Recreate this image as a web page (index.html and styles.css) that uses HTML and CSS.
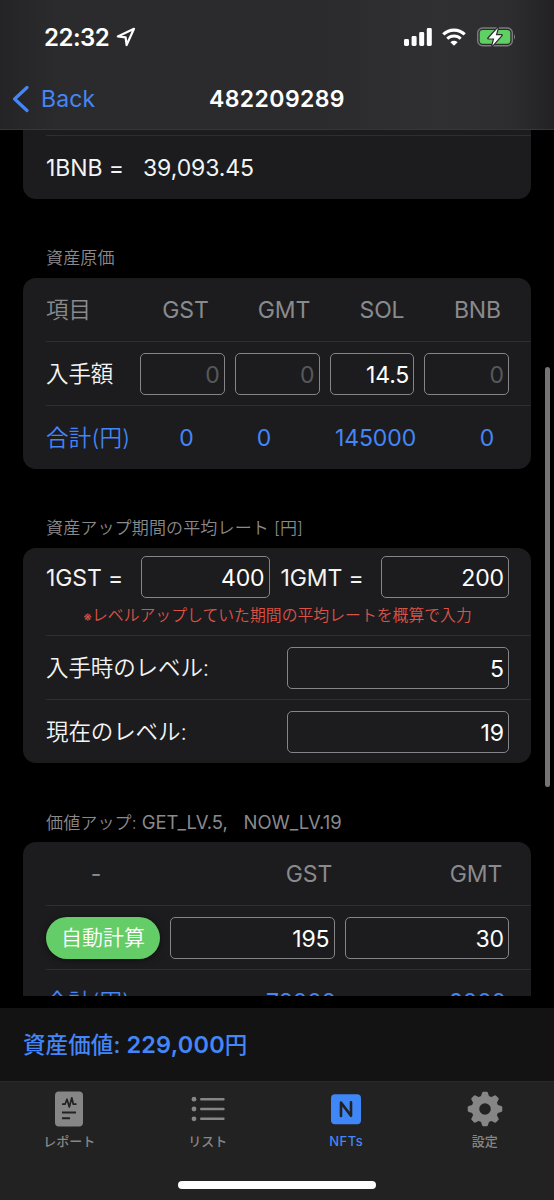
FILE: index.html
```
<!DOCTYPE html>
<html lang="ja">
<head>
    <meta charset="UTF-8">
    <meta name="viewport" content="width=device-width, initial-scale=1.0">
    <title>482209289</title>
    <link rel="stylesheet" href="styles.css">
</head>
<body>

    <header class="header">
        <div class="status-bar">
            <span class="time">22:32</span>
            <svg class="location" width="20" height="20" viewBox="0 0 20 20">
                <path d="M1.8 9.4 L18 1.8 L10.6 18 L9.6 10.4 Z" fill="none" stroke="#fff" stroke-width="2.2" stroke-linejoin="round"/>
            </svg>
            <div class="status-icons">
                <svg width="28" height="18" viewBox="0 0 28 18" fill="#fff">
                    <rect x="0" y="11" width="5" height="7" rx="1.4"/>
                    <rect x="7.6" y="8" width="5" height="10" rx="1.4"/>
                    <rect x="15.2" y="4" width="5" height="14" rx="1.4"/>
                    <rect x="22.8" y="0" width="5" height="18" rx="1.4"/>
                </svg>
                <svg class="wifi" width="24" height="18" viewBox="0 0 24 18">
                    <path d="M1.3 6.4 A15.3 15.3 0 0 1 22.7 6.4" fill="none" stroke="#fff" stroke-width="3.2"/>
                    <path d="M5.3 10.8 A9.6 9.6 0 0 1 18.7 10.8" fill="none" stroke="#fff" stroke-width="3"/>
                    <path d="M8.4 14.2 A5.2 5.2 0 0 1 15.6 14.2 L12 17.8 Z" fill="#fff"/>
                </svg>
                <svg class="battery" width="40" height="20" viewBox="0 0 40 20">
                    <rect x=".7" y="1" width="34.6" height="17.8" rx="5" fill="none" stroke="#7b7b7d" stroke-width="1.4"/>
                    <rect x="2.7" y="3" width="30.6" height="13.8" rx="3.2" fill="#5fd163"/>
                    <path d="M37 7 Q39.2 9.9 37 12.8 Z" fill="#7b7b7d"/>
                    <path d="M20.8 1 L11.4 11.4 L17.3 11.4 L15.3 18.8 L24.6 8.2 L18.8 8.2 Z" fill="#fff" stroke="#2c2c2e" stroke-width="2.4" paint-order="stroke" stroke-linejoin="round"/>
                </svg>
            </div>
        </div>
        <div class="nav-bar">
            <a class="back">
                <svg width="17" height="28" viewBox="0 0 17 28">
                    <path d="M15 2.5 L2.6 14 L15 25.5" fill="none" stroke="#4486f6" stroke-width="3.2" stroke-linecap="round" stroke-linejoin="round"/>
                </svg>
                <span>Back</span>
            </a>
            <h1>482209289</h1>
        </div>
    </header>

    <main class="content">
        <section class="card card-top">
            <div class="row">
                <span class="name">1BNB =</span>
                <span>39,093.45</span>
            </div>
        </section>

        <!-- 資産原価 -->
        <h2>資産原価</h2>
        <section class="card">
            <div class="row cost-head">
                <span class="label">項目</span>
                <span>GST</span>
                <span>GMT</span>
                <span>SOL</span>
                <span>BNB</span>
            </div>
            <div class="row cost-inputs">
                <span class="label">入手額</span>
                <input type="text" placeholder="0">
                <input type="text" placeholder="0">
                <input type="text" value="14.5">
                <input type="text" placeholder="0">
            </div>
            <div class="row cost-total">
                <span class="label">合計(円)</span>
                <span>0</span>
                <span>0</span>
                <span>145000</span>
                <span>0</span>
            </div>
        </section>

        <!-- 平均レートとレベル -->
        <h2>資産アップ期間の平均レート [円]</h2>
        <section class="card">
            <div class="row rate">
                <div class="rate-inputs">
                    <span class="label">1GST =</span>
                    <input type="text" value="400">
                    <span class="label">1GMT =</span>
                    <input type="text" value="200">
                </div>
                <p class="note"><span class="mark">※</span>レベルアップしていた期間の平均レートを概算で入力</p>
            </div>
            <div class="row level">
                <span class="label">入手時のレベル:</span>
                <input type="text" value="5">
            </div>
            <div class="row level">
                <span class="label">現在のレベル:</span>
                <input type="text" value="19">
            </div>
        </section>

        <!-- 価値アップ -->
        <h2>価値アップ: <span class="latin">GET_LV.5,&nbsp;&nbsp; NOW_LV.19</span></h2>
        <section class="card">
            <div class="row value-head">
                <span>-</span>
                <span>GST</span>
                <span>GMT</span>
            </div>
            <div class="row value-inputs">
                <button type="button">自動計算</button>
                <input type="text" value="195">
                <input type="text" value="30">
            </div>
            <div class="row value-total">
                <span class="label">合計(円)</span>
                <span>78000</span>
                <span>6000</span>
            </div>
        </section>
        <div class="scrollbar"></div>
    </main>

    <div class="summary">資産価値: <span class="latin">229,000</span>円</div>

    <nav class="tab-bar">
        <a class="tab">
            <svg width="36" height="36" viewBox="0 0 36 36">
                <rect x="4" y="0.5" width="28" height="35" rx="4" fill="#868686"/>
                <path d="M11 13.2 H14 L16 8.2 L18.3 16 L20.8 6.8 L22.3 13.2 H25.5" fill="none" stroke="#222" stroke-width="1.7" stroke-linejoin="round"/>
                <path d="M11 21.5 H25 M11 27.3 H19" stroke="#222" stroke-width="2"/>
            </svg>
            <span>レポート</span>
        </a>
        <a class="tab">
            <svg width="36" height="36" viewBox="0 0 36 36" fill="#868686">
                <circle cx="4" cy="8.2" r="2.4"/>
                <circle cx="4" cy="18" r="2.4"/>
                <circle cx="4" cy="27.8" r="2.4"/>
                <path d="M11.2 8.2 H33.5 M11.2 18 H33.5 M11.2 27.8 H33.5" stroke="#868686" stroke-width="2.4" stroke-linecap="round"/>
            </svg>
            <span>リスト</span>
        </a>
        <a class="tab active">
            <svg width="36" height="36" viewBox="0 0 36 36">
                <rect x="3" y="3.2" width="30" height="30" rx="4" fill="#3f86f7"/>
                <path d="M13 25 V11.6 L23 24.8 V11.4" fill="none" stroke="#222" stroke-width="2.6" stroke-linecap="round" stroke-linejoin="round"/>
            </svg>
            <span>NFTs</span>
        </a>
        <a class="tab">
            <svg width="36" height="36" viewBox="-18 -18 36 36" fill="#868686">
                <circle r="9.6" fill="none" stroke="#868686" stroke-width="7.6"/>
                <path id="tooth" d="M-4.6 -11 L-2.9 -16.3 Q-2.6 -17.3 -1.6 -17.3 H1.6 Q2.6 -17.3 2.9 -16.3 L4.6 -11 Z"/>
                <use href="#tooth" transform="rotate(45)"/>
                <use href="#tooth" transform="rotate(90)"/>
                <use href="#tooth" transform="rotate(135)"/>
                <use href="#tooth" transform="rotate(180)"/>
                <use href="#tooth" transform="rotate(225)"/>
                <use href="#tooth" transform="rotate(270)"/>
                <use href="#tooth" transform="rotate(315)"/>
            </svg>
            <span>設定</span>
        </a>
        <div class="home-indicator"></div>
    </nav>

</body>
</html>
```

FILE: styles.css
```
* {
    box-sizing: border-box;
}

body {
    margin: 0;
    height: 1200px;
    display: flex;
    flex-direction: column;
    overflow: hidden;
    background-color: #000;
    color: #f4f4f4;
    font-family: Inter, "Noto Sans CJK JP", sans-serif;
    font-size: 23px;
    line-height: 30px;
    letter-spacing: -0.1px;
}

/* En-tête */
.header {
    height: 130px;
    flex: none;
    border-bottom: 1px solid #363638;
    background: linear-gradient(90deg, #242426 0, #2b2b2d 60px, #2b2b2d 320px, #303032 440px, #2d2d2f 510px, #222224 554px);
}

.status-bar {
    height: 74px;
    display: flex;
    align-items: center;
    padding: 0 37px 0 44px;
    color: #fff;
}

.time {
    padding-top: 1px;
    font-weight: 600;
    font-size: 24px;
    letter-spacing: -0.5px;
}

.location {
    margin-left: 7px;
}

.status-icons {
    display: flex;
    align-items: center;
    margin-left: auto;
}

.wifi {
    margin-left: 10px;
}

.battery {
    margin-left: 11px;
}

.nav-bar {
    height: 50px;
    display: grid;
    grid-template-columns: 1fr auto 1fr;
    align-items: center;
    padding: 0 12px;
}

.back {
    display: flex;
    align-items: center;
    gap: 12px;
    color: #4486f6;
    letter-spacing: 0.1px;
}

h1 {
    margin: 0;
    font-size: 23px;
    font-weight: 600;
    letter-spacing: 0.4px;
    color: #fff;
}

/* Liste */
.content {
    position: relative;
    height: 866px;
    flex: none;
    overflow: hidden;
    padding: 0 23px;
}

h2 {
    margin: 0;
    height: 79px;
    padding: 44px 0 0 23px;
    font-size: 17px;
    font-weight: 350;
    line-height: 30px;
    letter-spacing: 0.15px;
    color: #8a8a8d;
}

h2 .latin {
    font-size: 18.5px;
    font-weight: 400;
    letter-spacing: 0;
}

.card {
    padding-left: 23px;
    border-radius: 13px;
    background-color: #1c1c1e;
}

.card-top {
    padding-top: 5px;
    border-radius: 0 0 13px 13px;
}

.card-top .name {
    width: 97px;
}

.card-top .row:first-child {
    border-top: 1px solid #2e2e30;
}

.row {
    height: 64px;
    display: flex;
    align-items: center;
    padding-top: 1px;
    border-top: 1px solid #2e2e30;
}

.row:first-child {
    height: 63px;
    border-top: none;
}

.card-top .row:first-child {
    height: 64px;
}

.label {
    flex: none;
    font-size: 22.5px;
    font-weight: 350;
}

input {
    height: 42px;
    min-width: 0;
    margin-top: -1px;
    padding: 2px 4px 0 4px;
    border: 1.5px solid #858588;
    border-radius: 5px;
    background: none;
    color: #fff;
    font: inherit;
    letter-spacing: -0.1px;
    text-align: right;
}

input::placeholder {
    color: #58585b;
    opacity: 1;
}

.cost-head,
.cost-total {
    display: grid;
    text-align: center;
}

.cost-head {
    grid-template-columns: 91px 97px 100px 96px 95px;
    color: #8a8a8d;
}

.cost-total {
    grid-template-columns: 102px 77px 78px 145px 78px;
    color: #4486f6;
}

.cost-head .label,
.cost-total .label {
    text-align: left;
}

.cost-total .label,
.value-total .label {
    letter-spacing: 0.2px;
}

.cost-inputs {
    gap: 10px;
    padding-right: 22px;
}

.cost-inputs .label {
    width: 84px;
}

.cost-inputs input {
    flex: 1;
}

.card .rate {
    height: 87px;
    flex-direction: column;
    align-items: stretch;
    padding: 9px 22px 0 0;
}

.rate-inputs {
    display: flex;
    align-items: center;
}

.rate-inputs .label {
    width: 95px;
    font-size: 23px;
    font-weight: 400;
}

.rate-inputs input {
    width: 129px;
}

.rate-inputs input + .label {
    width: 111px;
    padding-left: 11px;
}

.note {
    margin: 4px 0 0;
    font-size: 15.8px;
    font-weight: 350;
    line-height: 28px;
    letter-spacing: 0.05px;
    text-align: center;
    white-space: nowrap;
    color: #dc5246;
}

.mark {
    font-size: 12.5px;
    font-weight: 500;
}

.level {
    justify-content: space-between;
    padding-right: 22px;
}

.level input {
    width: 222px;
}

.value-head {
    display: grid;
    grid-template-columns: 100px 326px 8px;
    color: #8a8a8d;
}

.value-head span {
    display: flex;
    justify-content: center;
}

.value-inputs {
    gap: 10px;
    padding-right: 22px;
}

button {
    width: 114px;
    height: 42px;
    flex: none;
    margin-top: -1px;
    padding: 1px 0 0;
    border: none;
    border-radius: 21px;
    background-color: #65cd67;
    box-shadow: 0 1px 6px rgba(0, 0, 0, 0.5);
    color: #fff;
    font: inherit;
    font-size: 21px;
    font-weight: 350;
    letter-spacing: 0;
}

.value-inputs input {
    flex: 1;
}

.value-total {
    color: #4486f6;
}

.value-total span + span {
    width: 170px;
    text-align: right;
}

.value-total .label {
    width: 120px;
}

.scrollbar {
    position: absolute;
    top: 237px;
    right: 4px;
    width: 5px;
    height: 420px;
    border-radius: 3px;
    background-color: #757575;
}

/* Total */
.summary {
    height: 73px;
    flex: none;
    margin-top: 12px;
    padding: 22px 23px;
    background-color: #131313;
    color: #4486f6;
    font-weight: 500;
    font-size: 22.5px;
    letter-spacing: 0.1px;
}

.summary .latin {
    font-weight: 600;
    font-size: 23.5px;
    letter-spacing: 0.2px;
}

/* Onglets */
.tab-bar {
    position: relative;
    flex: 1;
    display: flex;
    border-top: 1px solid #2a2a2a;
    background-color: #222;
}

.tab {
    flex: 1;
    display: flex;
    flex-direction: column;
    align-items: center;
    padding-top: 9px;
    font-size: 13px;
    font-weight: 500;
    line-height: 20px;
    letter-spacing: 0;
    color: #868686;
}

.tab span {
    margin-top: 4px;
}

.active {
    color: #4486f6;
    letter-spacing: 0.5px;
}

.home-indicator {
    position: absolute;
    left: 178px;
    bottom: 11px;
    width: 198px;
    height: 8px;
    border-radius: 4px;
    background-color: #fff;
}
```
